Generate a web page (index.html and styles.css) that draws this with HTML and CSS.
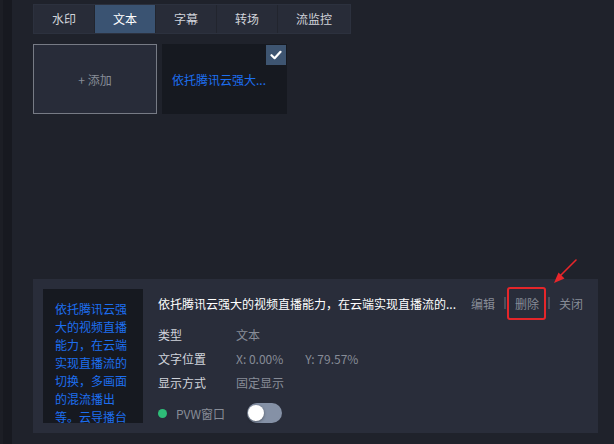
FILE: index.html
```html
<!DOCTYPE html>
<html lang="zh-CN">
<head>
  <meta charset="UTF-8" />
  <meta name="viewport" content="width=device-width, initial-scale=1.0"/>
  <title>文本素材</title>
  <link rel="stylesheet" href="styles.css">
</head>
<body>

  <div class="rail"><div class="rail-edge"></div></div>

  <div class="main">
    <div class="tabs">
      <div class="tab">水印</div>
      <div class="tab active">文本</div>
      <div class="tab">字幕</div>
      <div class="tab">转场</div>
      <div class="tab">流监控</div>
    </div>

    <div class="cards">
      <div class="card add">+ 添加</div>
      <div class="card item">
        <span class="check">
          <svg width="12" height="10" viewBox="0 0 12 10"><path d="M1.5 5.2 L4.6 8.2 L10.5 1.8" fill="none" stroke="#fff" stroke-width="2.2" stroke-linecap="round" stroke-linejoin="round"/></svg>
        </span>
        <span class="item-text">依托腾讯云强大...</span>
      </div>
    </div>

    <div class="panel">
      <div class="thumb">依托腾讯云强大的视频直播能力，在云端实现直播流的切换，多画面的混流播出等。云导播台提供多路输入源</div>
      <div class="info">
        <div class="title-row">
          <span class="title">依托腾讯云强大的视频直播能力，在云端实现直播流的...</span>
          <div class="actions">
            <span class="act">编辑</span>
            <span class="sep"></span>
            <span class="act marked">删除</span>
            <span class="sep"></span>
            <span class="act">关闭</span>
          </div>
        </div>
        <div class="meta">
          <span class="label">类型</span>
          <span class="value">文本</span>
        </div>
        <div class="meta">
          <span class="label">文字位置</span>
          <span class="value">X: 0.00%</span>
          <span class="value y">Y: 79.57%</span>
        </div>
        <div class="meta">
          <span class="label">显示方式</span>
          <span class="value">固定显示</span>
        </div>
        <div class="pvw">
          <span class="dot"></span>
          <span class="pvw-name">PVW窗口</span>
          <span class="switch"><span class="knob"></span></span>
        </div>
      </div>
    </div>
  </div>

  <svg class="arrow" width="30" height="30" viewBox="0 0 30 30">
    <path d="M27 1 L11 17" stroke="#e8262b" stroke-width="1.6" stroke-linecap="round"/>
    <path d="M5 24 L9.5 13.5 L15.5 19.5 Z" fill="#e8262b"/>
  </svg>

</body>
</html>
```

FILE: styles.css
```css
:root {
  --bg: #1f222b;
  --panel: #292d3a;
  --dark: #161920;
  --text: #d0d3da;
  --muted: #878c97;
  --blue: #1d6ff0;
}

html, body {
  margin: 0;
  height: 100%;
}

body {
  background-color: var(--bg);
  font-family: "Noto Sans CJK SC", "Liberation Sans", sans-serif;
  font-size: 12px;
  color: var(--text);
  display: flex;
  overflow: hidden;
  position: relative;
}

.rail {
  width: 12px;
  background-color: #1c1e25;
  display: flex;
  justify-content: flex-end;
}

.rail-edge {
  width: 9px;
  background-color: #171920;
}

.main {
  flex: 1;
  display: flex;
  flex-direction: column;
  padding: 4px 16px 11px 21px;
}

.tabs {
  display: flex;
  align-self: flex-start;
  background-color: #282c38;
  border: 1px solid #2c313e;
}

.tab {
  height: 28px;
  line-height: 28px;
  padding: 0 18px;
  color: var(--text);
  border-right: 1px solid #22252e;
}

.tab:last-child {
  border-right: none;
}

.tab.active {
  background-color: #3a5372;
  color: #fff;
}

.cards {
  display: flex;
  gap: 5px;
  margin-top: 10px;
}

.card {
  width: 124px;
  height: 70px;
  box-sizing: border-box;
  display: flex;
  align-items: center;
}

.card.add {
  background-color: #282c39;
  border: 1px solid #777b85;
  justify-content: center;
  color: var(--muted);
}

.card.item {
  background-color: var(--dark);
  padding-left: 10px;
  position: relative;
  width: 125px;
}

.item-text {
  color: var(--blue);
}

.check {
  position: absolute;
  top: 1px;
  right: 1px;
  width: 20px;
  height: 20px;
  background-color: #3e5571;
  display: flex;
  align-items: center;
  justify-content: center;
}

.panel {
  margin-top: auto;
  background-color: var(--panel);
  height: 154px;
  box-sizing: border-box;
  padding: 10px 15px 10px 10px;
  display: flex;
  gap: 15px;
}

.thumb {
  width: 100px;
  flex-shrink: 0;
  box-sizing: border-box;
  background-color: var(--dark);
  padding: 11px 12px 0 12px;
  line-height: 18px;
  color: var(--blue);
  overflow: hidden;
}

.info {
  flex: 1;
  padding-top: 4px;
}

.title-row {
  display: flex;
  align-items: center;
  height: 20px;
  margin-bottom: 9px;
}

.title {
  color: #fff;
  white-space: nowrap;
}

.actions {
  margin-left: auto;
  display: flex;
  align-items: center;
}

.act {
  color: var(--muted);
  position: relative;
}

.sep {
  width: 2px;
  height: 12px;
  background-color: #4a4f5b;
  margin: 0 9px;
}

.marked::after {
  content: "";
  position: absolute;
  left: -8px;
  right: -7px;
  top: -8px;
  bottom: -8px;
  border: 2px solid #e5262a;
  border-radius: 3px;
}

.meta {
  display: flex;
  align-items: center;
  height: 24px;
}

.label {
  width: 78px;
  color: var(--text);
}

.value {
  color: var(--muted);
}

.value.y {
  margin-left: 22px;
}

.pvw {
  display: flex;
  align-items: center;
  height: 20px;
  margin-top: 9px;
}

.dot {
  width: 9px;
  height: 9px;
  border-radius: 50%;
  background-color: #2ebd78;
  margin-right: 9px;
}

.pvw-name {
  color: var(--muted);
  width: 71px;
}

.switch {
  width: 35px;
  height: 20px;
  border-radius: 10px;
  background-color: #8591a6;
  position: relative;
}

.knob {
  position: absolute;
  left: 1px;
  top: 2px;
  width: 16px;
  height: 16px;
  border-radius: 50%;
  background-color: #fff;
  box-shadow: 0 1px 3px rgba(0, 0, 0, 0.4);
}

.arrow {
  position: absolute;
  left: 549px;
  top: 259px;
}
```
